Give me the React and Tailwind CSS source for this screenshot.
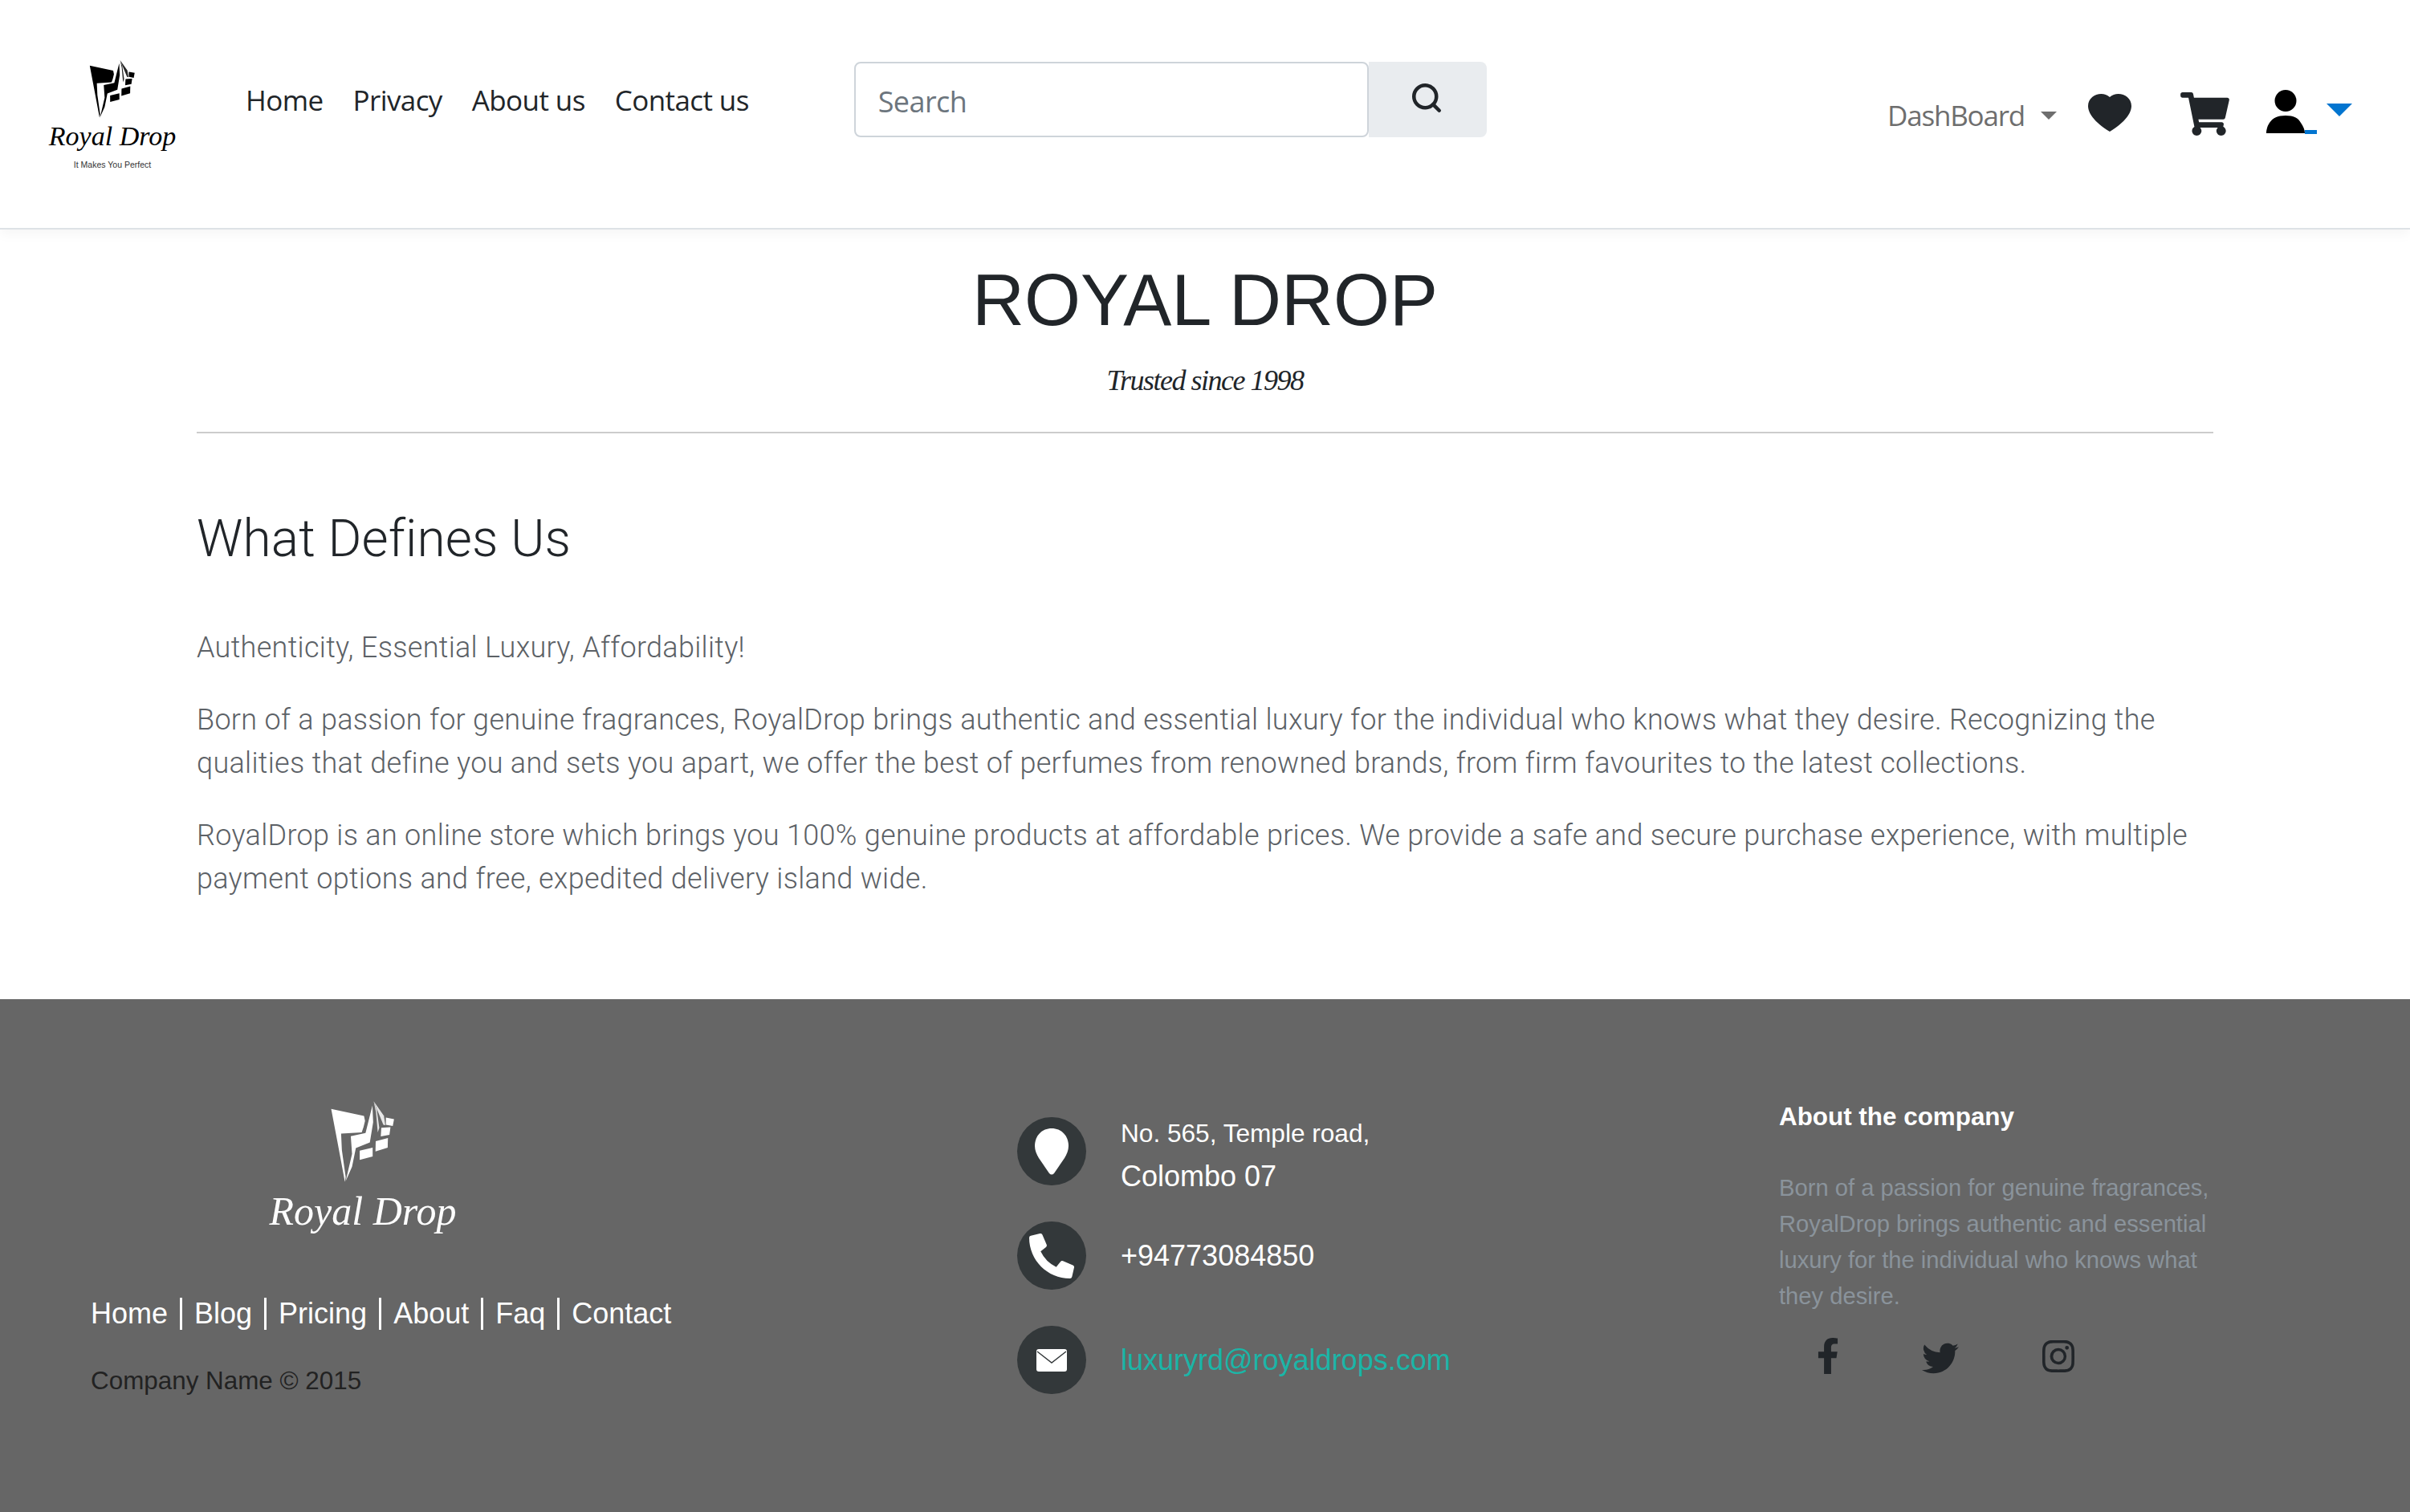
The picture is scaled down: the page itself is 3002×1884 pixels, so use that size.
import { Search } from "lucide-react";
import { BsHeartFill, BsTwitter, BsInstagram } from "react-icons/bs";
import { FaFacebookF, FaPhoneAlt, FaShoppingCart } from "react-icons/fa";

// Brand mark, traced from the logo, drawn with currentColor
function LogoMark({ className }) {
  return (
    <svg viewBox="35 20 265 330" className={className} fill="currentColor">
      <polygon points="43,58 172,86 176,105 170,130 163,150 82,155 85,220 100,325 97,345 68,190" />
      <polygon points="120,165 178,153 205,45 208,110 195,190 140,212 125,285 100,342 125,235" />
      <polygon points="155,222 206,210 206,245 155,258" />
      <polygon points="258,92 290,98 285,125 258,120" />
      <polygon points="240,132 276,130 272,160 238,166" />
      <polygon points="218,185 266,172 265,210 217,225" />
      <polygon points="210,28 222,60 232,132 226,150 219,70" opacity="0.85" />
      <polygon points="210,28 250,85 256,122 248,120" opacity="0.85" />
    </svg>
  );
}

function FooterLink({ children, last }) {
  return (
    <>
      <a className="text-white">{children}</a>
      {!last && <span className="w-[3px] h-[40px] bg-white mx-[15px]"></span>}
    </>
  );
}

function ContactIcon({ children }) {
  return (
    <div className="w-[86px] h-[85px] rounded-full bg-[#33383a] flex items-center justify-center text-white shrink-0">
      {children}
    </div>
  );
}

export default function App() {
  return (
    <div className="min-h-[1884px] bg-white font-['Liberation_Sans',sans-serif] text-[#212529] overflow-hidden flex flex-col">
      {/* Navbar */}
      <nav className="relative z-10 h-[286px] border-b-2 border-[#dee2e6] bg-white shadow-[0_6px_14px_rgba(0,0,0,0.04)] flex items-start font-['Open_Sans',sans-serif]">
        <div className="w-[180px] ml-[50px] mt-[73px] flex flex-col items-center text-black">
          <LogoMark className="w-[60px] h-[75px]" />
          <div className="mt-[3px] h-[38px] font-['Liberation_Serif',serif] italic text-[34px] leading-[38px] whitespace-nowrap">Royal Drop</div>
          <div className="mt-[11px] text-[10.5px] leading-[10px] font-['Liberation_Sans',sans-serif] text-[#333] whitespace-nowrap">It Makes You Perfect</div>
        </div>
        <ul className="ml-[76px] mt-[100px] flex gap-[37px] text-[35px] leading-[50px] tracking-[-0.6px] text-[#212529]">
          <li>Home</li>
          <li>Privacy</li>
          <li>About us</li>
          <li>Contact us</li>
        </ul>
        <div className="ml-[131px] mt-[77px] flex h-[94px]">
          <input
            placeholder="Search"
            className="w-[641px] h-full border-2 border-[#ced4da] rounded-[8px] pl-[28px] pt-[4px] text-[36px] tracking-[-0.6px] placeholder:text-[#6c757d] outline-none"
          />
          <button className="w-[147px] h-full bg-[#e9ecef] rounded-r-[8px] flex items-center justify-center">
            <Search size={42} strokeWidth={2.6} className="text-[#212529] -mt-[4px] -ml-[2px]" />
          </button>
        </div>
        <div className="ml-auto mr-[72px] mt-[112px] flex items-start">
          <span className="mt-[7px] text-[35px] leading-[50px] tracking-[-1.2px] text-[#6e6e6e]">DashBoard</span>
          <span className="mt-[27px] ml-[20px] border-x-[10px] border-x-transparent border-t-[10px] border-t-[#6e6e6e]"></span>
          <BsHeartFill preserveAspectRatio="none" className="ml-[39px] mt-[5px] w-[54px] h-[50px] text-[#212529]" />
          <FaShoppingCart className="ml-[61px] mt-[3px] w-[61px] h-[54px] text-[#212529]" />
          <svg viewBox="0 0 48 54" className="ml-[46px] w-[48px] h-[54px] text-black" fill="currentColor">
            <ellipse cx="24" cy="13.5" rx="13.5" ry="13.5" />
            <path d="M0 54c0-2 .5-8 4-13 4-6 10-9 20-9s16 3 19 9c3 4 5 9 5 13z" />
          </svg>
          <span className="mt-[50px] w-[15px] h-[5px] bg-[#0275d0]"></span>
          <span className="ml-[12px] mt-[17px] border-x-[16px] border-x-transparent border-t-[16px] border-t-[#0275d0]"></span>
        </div>
      </nav>

      {/* Intro */}
      <main className="px-[245px] flex-1">
        <header className="text-center">
          <h1 className="mt-[38px] text-[90px] leading-[100px] text-[#212529]">ROYAL DROP</h1>
          <p className="mt-[27px] font-['Liberation_Serif',serif] italic text-[36px] leading-[46px] tracking-[-1.5px] text-[#212529]">Trusted since 1998</p>
        </header>
        <hr className="mt-[41px] border-t-2 border-[#cccccc]" />
        <section className="font-['Roboto',sans-serif] font-light">
          <h2 className="mt-[94px] text-[64px] leading-[76px] tracking-[0.1px] text-[#212529]">What Defines Us</h2>
          <p className="mt-[70px] text-[36px] leading-[54px] tracking-[0.3px] text-[#5c6166]">Authenticity, Essential Luxury, Affordability!</p>
          <p className="mt-[36px] text-[36px] leading-[54px] tracking-[0.3px] text-[#5c6166]">
            Born of a passion for genuine fragrances, RoyalDrop brings authentic and essential luxury for the individual who knows what they desire. Recognizing the qualities that define you and sets you apart, we offer the best of perfumes from renowned brands, from firm favourites to the latest collections.
          </p>
          <p className="mt-[36px] text-[36px] leading-[54px] tracking-[0.3px] text-[#5c6166]">
            RoyalDrop is an online store which brings you 100% genuine products at affordable prices. We provide a safe and secure purchase experience, with multiple payment options and free, expedited delivery island wide.
          </p>
        </section>
      </main>

      {/* Footer */}
      <footer className="h-[639px] bg-[#666666] flex">
        <div className="w-[1267px] pl-[113px] pt-[124px]">
          <div className="w-[230px] ml-[224px] flex flex-col items-center text-white">
            <LogoMark className="w-[84px] h-[106px]" />
            <div className="mt-[6px] font-['Liberation_Serif',serif] italic text-[50px] leading-[56px] whitespace-nowrap">Royal Drop</div>
          </div>
          <div className="mt-[80px] flex items-center text-[36px] leading-[40px]">
            <FooterLink>Home</FooterLink>
            <FooterLink>Blog</FooterLink>
            <FooterLink>Pricing</FooterLink>
            <FooterLink>About</FooterLink>
            <FooterLink>Faq</FooterLink>
            <FooterLink last>Contact</FooterLink>
          </div>
          <p className="mt-[44px] text-[31.4px] leading-[40px] text-[#222222]">Company Name © 2015</p>
        </div>

        <div className="w-[949px] pt-[147px] flex flex-col gap-[45px]">
          <div className="flex items-center gap-[43px] h-[85px]">
            <ContactIcon>
              <svg viewBox="0 0 44 58" className="w-[44px] h-[58px]" fill="currentColor">
                <path d="M22 0C10 0 1 9 1 22c0 5 2 10 5 15l13 19c2 2 4 2 6 0l13-19c3-5 5-10 5-15C43 9 34 0 22 0z" />
              </svg>
            </ContactIcon>
            <div className="mt-[8px] text-white leading-[54px]">
              <p className="text-[31.6px]">No. 565, Temple road,</p>
              <p className="text-[36px]">Colombo 07</p>
            </div>
          </div>
          <div className="flex items-center gap-[43px]">
            <ContactIcon><FaPhoneAlt className="w-[56px] h-[56px]" /></ContactIcon>
            <span className="text-[36px] text-white">+94773084850</span>
          </div>
          <div className="flex items-center gap-[43px]">
            <ContactIcon>
              <svg viewBox="0 0 38 28" className="w-[38px] h-[28px]">
                <rect width="38" height="28" rx="3" fill="#ffffff" />
                <path d="M1 3l18 14L37 3" fill="none" stroke="#33383a" strokeWidth="1.4" />
              </svg>
            </ContactIcon>
            <a className="text-[36px] text-[#1bb5a7]">luxuryrd@royaldrops.com</a>
          </div>
        </div>

        <div className="flex-1 pt-[127px]">
          <h3 className="text-[31.4px] leading-[40px] font-bold text-white">About the company</h3>
          <p className="mt-[46px] w-[560px] text-[29.2px] leading-[45px] text-[#8a939b]">
            Born of a passion for genuine fragrances, RoyalDrop brings authentic and essential luxury for the individual who knows what they desire.
          </p>
          <div className="mt-[29px] flex items-start text-[#212529]">
            <FaFacebookF className="ml-[46px] w-[30px] h-[45px]" />
            <BsTwitter className="ml-[102px] mt-[1px] w-[46px] h-[46px]" />
            <BsInstagram className="ml-[104px] mt-[3px] w-[40px] h-[40px]" />
          </div>
        </div>
      </footer>
    </div>
  );
}
